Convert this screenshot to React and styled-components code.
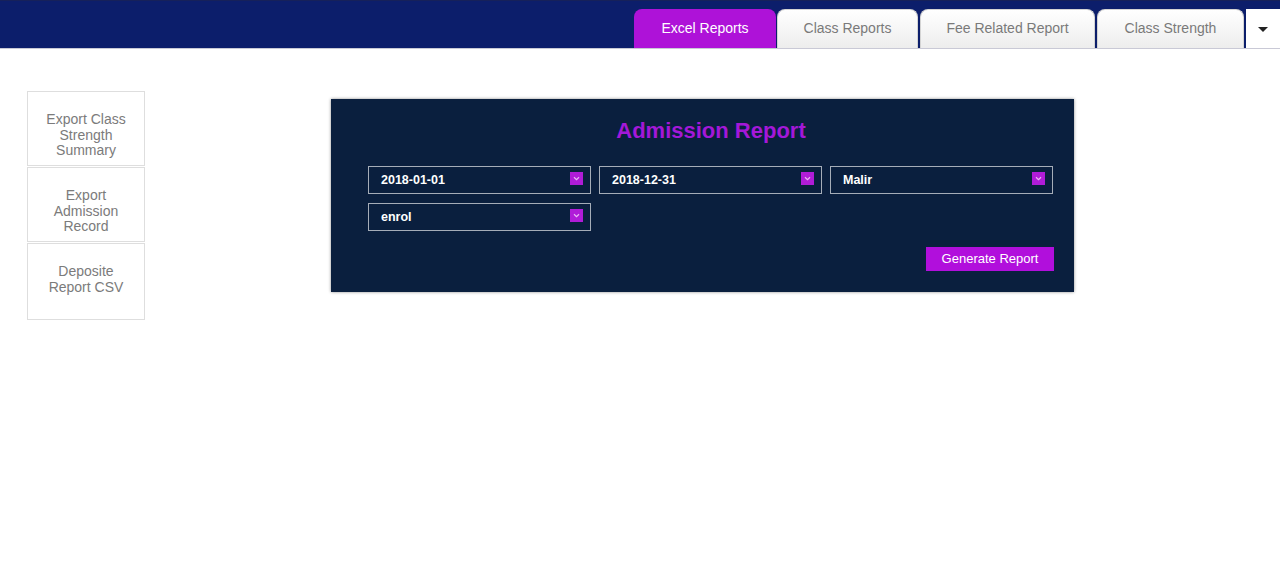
import React from 'react';
import styled, { createGlobalStyle } from 'styled-components';

const GlobalStyle = createGlobalStyle`
  body {
    margin: 0;
    background: #fff;
    font-family: "Liberation Sans", Arial, sans-serif;
  }
`;

const Header = styled.div`
  height: 49px;
  background: #0c1e6b;
  border-top: 1px solid #16215a;
  border-bottom: 1px solid #c9c9d6;
  box-sizing: border-box;
  display: flex;
  justify-content: flex-end;
  align-items: flex-end;
`;

const Tabs = styled.div`
  display: flex;
  align-items: flex-end;
  gap: 1px;
`;

const Tab = styled.div`
  width: ${props => props.width}px;
  height: 39px;
  box-sizing: border-box;
  border-radius: 8px 8px 0 0;
  display: flex;
  align-items: center;
  justify-content: center;
  font-size: 14px;
  padding-bottom: 2px;
  color: ${props => (props.active ? '#fff' : '#7a7a7a')};
  background: ${props => (props.active ? '#ae12d8' : 'linear-gradient(#fff, #ededed)')};
  border: ${props => (props.active ? 'none' : '1px solid #d4d4d4')};
  border-bottom: none;
  margin-left: ${props => props.gapLeft || 0}px;
`;

const Caret = styled.div`
  width: 34px;
  height: 39px;
  background: #fff;
  display: flex;
  align-items: center;
  justify-content: center;
  margin-left: 1px;
  &::after {
    content: '';
    border-left: 5px solid transparent;
    border-right: 5px solid transparent;
    border-top: 5px solid #222;
    margin-top: 1px;
  }
`;

const Body = styled.div`
  display: flex;
  align-items: flex-start;
  padding: 42px 0 0 27px;
`;

const Side = styled.div`
  display: flex;
  flex-direction: column;
  gap: 1px;
  width: 118px;
`;

const SideItem = styled.div`
  height: ${props => props.h}px;
  box-sizing: border-box;
  border: 1px solid #dedede;
  text-align: center;
  color: #7b7b7b;
  font-size: 14px;
  line-height: 15.5px;
  padding: 20px 14px 0;
`;

const Panel = styled.div`
  margin: 8px 0 0 186px;
  width: 743px;
  height: 193px;
  box-sizing: border-box;
  background: #0a1f3e;
  box-shadow: 0 0 3px rgba(0, 0, 0, 0.45);
  padding: 18px 20px 0 37px;
`;

const Title = styled.h2`
  margin: 0 0 22px;
  text-align: center;
  color: #a418d8;
  font-size: 22px;
  font-weight: bold;
  line-height: 27px;
`;

const Grid = styled.div`
  display: grid;
  grid-template-columns: repeat(3, 223px);
  column-gap: 8px;
  row-gap: 9px;
`;

const Select = styled.div`
  height: 28px;
  box-sizing: border-box;
  border: 1px solid #a5adb8;
  display: flex;
  align-items: center;
  justify-content: space-between;
  padding: 0 7px 1px 12px;
  color: #fff;
  font-size: 12.5px;
  font-weight: bold;
`;

const Arrow = styled.span`
  width: 13px;
  height: 13px;
  background: #b01cd8;
  display: flex;
  align-items: center;
  justify-content: center;
  margin-top: -2px;
`;

const Actions = styled.div`
  display: flex;
  justify-content: flex-end;
  margin-top: 16px;
`;

const Button = styled.button`
  width: 128px;
  height: 24px;
  border: none;
  background: #b10fdc;
  color: #fff;
  font-family: inherit;
  font-size: 13px;
  padding: 0 0 1px;
`;

const selects = ['2018-01-01', '2018-12-31', 'Malir', 'enrol'];

const App = () => (
  <>
    <GlobalStyle />
    <Header>
      <Tabs>
        <Tab active width={142}>Excel Reports</Tab>
        <Tab width={141}>Class Reports</Tab>
        <Tab width={175} gapLeft={1}>Fee Related Report</Tab>
        <Tab width={147} gapLeft={1}>Class Strength</Tab>
        <Caret />
      </Tabs>
    </Header>
    <Body>
      <Side>
        <SideItem h={75}>Export Class Strength Summary</SideItem>
        <SideItem h={75}>Export Admission Record</SideItem>
        <SideItem h={77}>Deposite Report CSV</SideItem>
      </Side>
      <Panel>
        <Title>Admission Report</Title>
        <Grid>
          {selects.map(s => (
            <Select key={s}>
              {s}
              <Arrow>
                <svg width="7" height="5" viewBox="0 0 7 5">
                  <path d="M1 1.2 L3.5 3.6 L6 1.2" fill="none" stroke="#e9b8f5" strokeWidth="1.2" />
                </svg>
              </Arrow>
            </Select>
          ))}
        </Grid>
        <Actions>
          <Button>Generate Report</Button>
        </Actions>
      </Panel>
    </Body>
  </>
);

export default App;
